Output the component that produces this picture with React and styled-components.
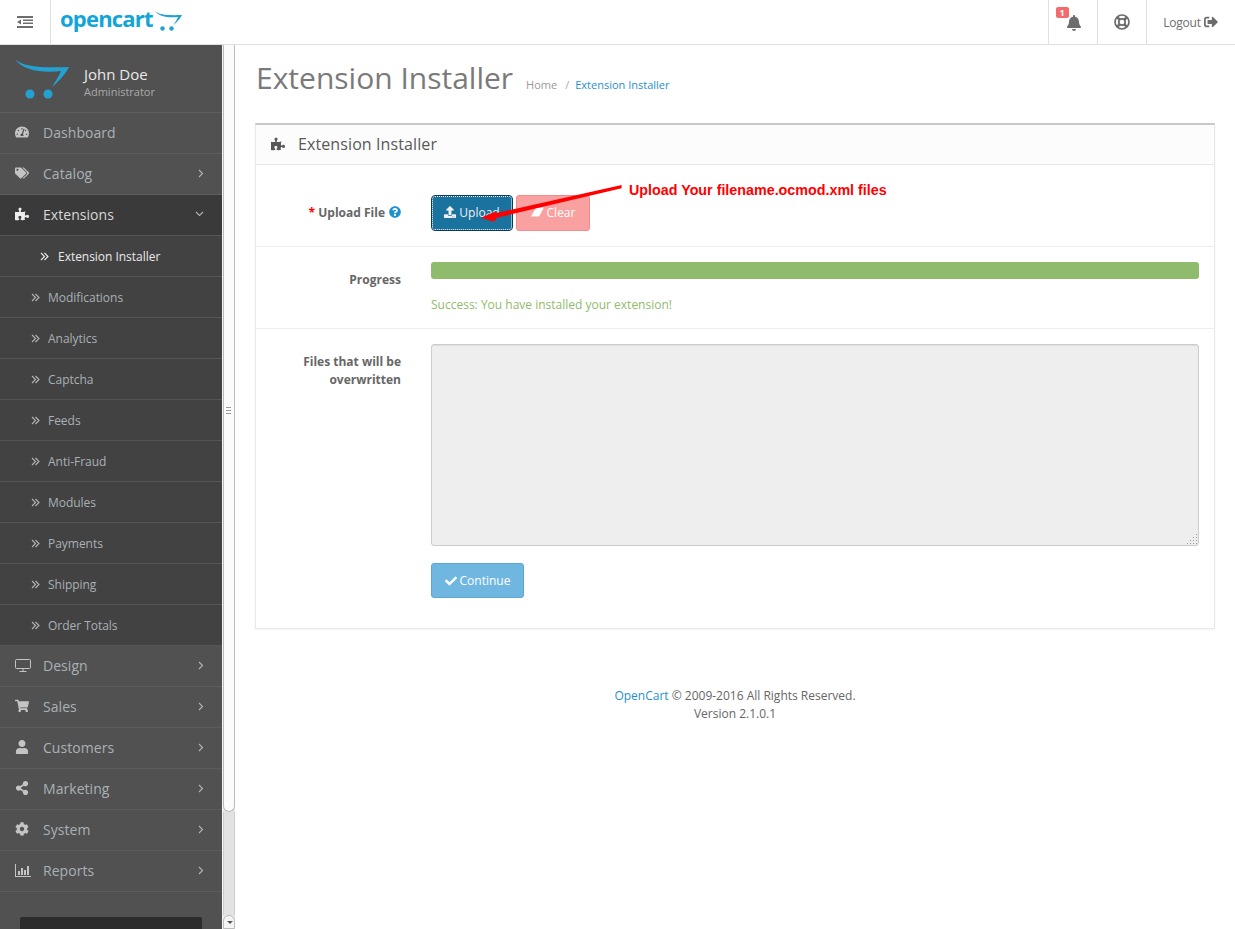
import styled, { createGlobalStyle } from 'styled-components';
import {
	FaTachometerAlt,
	FaTags,
	FaPuzzlePiece,
	FaShoppingCart,
	FaUser,
	FaShareAlt,
	FaCog,
	FaBell,
	FaSignOutAlt,
	FaUpload,
	FaCheck,
	FaQuestionCircle,
} from 'react-icons/fa';

const GlobalStyle = createGlobalStyle`
	html, body {
		margin: 0;
		padding: 0;
		height: 929px;
		overflow: hidden;
		background: #fff;
		font-family: 'Open Sans', sans-serif;
		font-size: 12px;
		color: #666;
	}
	* {
		box-sizing: border-box;
	}
`;

const ChartIcon = () => (
	<svg width="16" height="13" viewBox="0 0 16 13" fill="currentColor">
		<path d="M0 0h1v12h15v1H0z" />
		<path d="M3 7h2v4H3zM6 4h2v7H6zM9 6h2v5H9zM12 2h2v9h-2z" />
	</svg>
);

const DesktopIcon = () => (
	<svg width="16" height="13" viewBox="0 0 16 13" fill="none" stroke="currentColor">
		<rect x="0.5" y="0.5" width="15" height="9" rx="1" />
		<path d="M8 10v2M4.5 12.5h7" />
	</svg>
);

const AngleRight = () => (
	<svg width="6" height="9" viewBox="0 0 6 9" fill="none" stroke="currentColor" strokeWidth="1.1">
		<path d="M1 1l3.5 3.5L1 8" />
	</svg>
);

const AngleDown = () => (
	<svg width="9" height="6" viewBox="0 0 9 6" fill="none" stroke="currentColor" strokeWidth="1.1">
		<path d="M1 1l3.5 3.5L8 1" />
	</svg>
);

const AngleDouble = () => (
	<svg width="9" height="9" viewBox="0 0 9 9" fill="none" stroke="currentColor" strokeWidth="1.1">
		<path d="M1 1l3.5 3.5L1 8M4.5 1L8 4.5 4.5 8" />
	</svg>
);

const ToggleIcon = () => (
	<svg width="16" height="12" viewBox="0 0 16 12" fill="currentColor">
		<path d="M0 0h16v2H0zM6 3.5h10V5H6zM6 6.5h10V8H6zM0 10h16v2H0zM0 6l4-2.6v5.2z" />
	</svg>
);

const LifeRing = () => (
	<svg width="16" height="16" viewBox="0 0 16 16" fill="none" stroke="currentColor">
		<circle cx="8" cy="8" r="7" strokeWidth="1.7" />
		<circle cx="8" cy="8" r="3.2" strokeWidth="1.7" />
		<path d="M3 3l2.6 2.6M13 3l-2.6 2.6M3 13l2.6-2.6M13 13l-2.6-2.6" strokeWidth="2.6" />
	</svg>
);

const EraserIcon = () => (
	<svg width="13" height="10" viewBox="0 0 13 10" fill="currentColor">
		<path d="M5 0.5h8L8 9.5H0z" />
	</svg>
);

const topMenu = [
	{ label: 'Dashboard', icon: <FaTachometerAlt /> },
	{ label: 'Catalog', icon: <FaTags />, arrow: true },
	{ label: 'Extensions', icon: <FaPuzzlePiece />, open: true },
];

const subMenu = ['Extension Installer', 'Modifications', 'Analytics', 'Captcha', 'Feeds', 'Anti-Fraud', 'Modules', 'Payments', 'Shipping', 'Order Totals'];

const bottomMenu = [
	{ label: 'Design', icon: <DesktopIcon /> },
	{ label: 'Sales', icon: <FaShoppingCart /> },
	{ label: 'Customers', icon: <FaUser /> },
	{ label: 'Marketing', icon: <FaShareAlt /> },
	{ label: 'System', icon: <FaCog /> },
	{ label: 'Reports', icon: <ChartIcon /> },
];

const CartMark = ({ width, height }) => (
	<svg width={width} height={height} viewBox="0 0 56 40" fill="#23a1d1">
		<path d="M0 0C8 8 26 9 54 8C50 16 43 23 37 28C41 21 44 17 46 12C28 14 8 12 0 0Z" />
		<circle cx="15" cy="35" r="4.5" />
		<circle cx="33" cy="35" r="4.5" />
	</svg>
);

const MenuRow = ({ item }) => (
	<MenuItem $active={item.open}>
		<MenuIcon $active={item.open}>{item.icon}</MenuIcon>
		<MenuLabel>{item.label}</MenuLabel>
		{item.open && <Caret><AngleDown /></Caret>}
		{item.arrow && <Caret><AngleRight /></Caret>}
	</MenuItem>
);

const App = () => {
	return (
		<>
			<GlobalStyle />
			<Page>
				<Header>
					<MenuToggle>
						<ToggleIcon />
					</MenuToggle>
					<Logo>
						<LogoText>opencart</LogoText>
						<LogoCart>
							<CartMark width={28} height={20} />
						</LogoCart>
					</Logo>
					<HeaderNav>
						<NavCell>
							<BellWrap>
								<FaBell />
								<Badge>1</Badge>
							</BellWrap>
						</NavCell>
						<NavCell>
							<LifeRing />
						</NavCell>
						<LogoutCell>
							Logout <FaSignOutAlt />
						</LogoutCell>
					</HeaderNav>
				</Header>
				<Body>
					<Sidebar>
						<Profile>
							<CartMark width={56} height={40} />
							<ProfileText>
								<ProfileName>John Doe</ProfileName>
								<ProfileRole>Administrator</ProfileRole>
							</ProfileText>
						</Profile>
						{topMenu.map((item) => (
							<MenuRow key={item.label} item={item} />
						))}
						{subMenu.map((label, i) => (
							<SubItem key={label} $active={i === 0}>
								<AngleDouble />
								{label}
							</SubItem>
						))}
						{bottomMenu.map((item) => (
							<MenuRow key={item.label} item={{ ...item, arrow: true }} />
						))}
						<StatsBox />
					</Sidebar>
					<Gutter>
						<Grip>
							<i />
							<i />
							<i />
						</Grip>
						<Thumb />
						<Track />
						<ScrollArrow />
					</Gutter>
					<Content>
						<TitleRow>
							<Title>Extension Installer</Title>
							<Crumbs>
								<CrumbHome>Home</CrumbHome>
								<CrumbSep>/</CrumbSep>
								<CrumbLink>Extension Installer</CrumbLink>
							</Crumbs>
						</TitleRow>
						<Panel>
							<PanelHeading>
								<FaPuzzlePiece />
								Extension Installer
							</PanelHeading>
							<FormRow $height={82} $top={30}>
								<FieldLabel>
									<Required>*</Required>&nbsp;Upload File
									<HelpIcon>
										<FaQuestionCircle />
									</HelpIcon>
								</FieldLabel>
								<FieldBody>
									<ButtonRow>
										<Button $kind="upload">
											<FaUpload /> Upload
										</Button>
										<Button $kind="clear">
											<EraserIcon /> Clear
										</Button>
									</ButtonRow>
								</FieldBody>
							</FormRow>
							<FormRow $height={82} $top={15}>
								<FieldLabel>Progress</FieldLabel>
								<FieldBody>
									<ProgressTrack>
										<ProgressBar style={{ width: '100%' }} />
									</ProgressTrack>
									<SuccessText>Success: You have installed your extension!</SuccessText>
								</FieldBody>
							</FormRow>
							<FilesRow>
								<FieldLabel>
									Files that will be
									<br />
									overwritten
								</FieldLabel>
								<FieldBody>
									<Overwrite disabled />
									<Button $kind="continue">
										<FaCheck /> Continue
									</Button>
								</FieldBody>
							</FilesRow>
						</Panel>
						<Footer>
							<FooterLink>OpenCart</FooterLink> © 2009-2016 All Rights Reserved.
							<br />
							Version 2.1.0.1
						</Footer>
						<Note>
							<svg width="160" height="50" viewBox="0 0 160 50">
								<path d="M151.6 5L151.6 8.3L27 37.7L24 41.7L11 37.7L25 31.7L26.7 33Z" fill="#f00" />
							</svg>
							<NoteText>Upload Your filename.ocmod.xml files</NoteText>
						</Note>
					</Content>
				</Body>
			</Page>
		</>
	);
};

const Page = styled.div`
	width: 1235px;
	height: 929px;
	overflow: hidden;
	display: flex;
	flex-direction: column;
`;

const Header = styled.header`
	height: 45px;
	flex: none;
	display: flex;
	align-items: stretch;
	background: #fff;
	border-bottom: 1px solid #e1e1e1;
`;

const MenuToggle = styled.div`
	width: 51px;
	display: flex;
	align-items: center;
	justify-content: center;
	border-right: 1px solid #e1e1e1;
	color: #6d6d6d;
`;

const Logo = styled.div`
	display: flex;
	align-items: flex-start;
	padding: 2px 0 0 9px;
`;

const LogoText = styled.span`
	font-family: 'Open Sans', sans-serif;
	font-weight: 700;
	font-size: 22px;
	line-height: 32px;
	letter-spacing: -0.8px;
	color: #12a5d8;
`;

const LogoCart = styled.span`
	margin: 9px 0 0 2px;
	display: block;
`;

const HeaderNav = styled.nav`
	margin-left: auto;
	display: flex;
	align-items: stretch;
`;

const NavCell = styled.div`
	width: 49px;
	display: flex;
	align-items: center;
	justify-content: center;
	border-left: 1px solid #e1e1e1;
	color: #6d6d6d;
	font-size: 16px;
`;

const BellWrap = styled.span`
	position: relative;
	display: flex;
	margin: 1px 0 0 1px;
`;

const Badge = styled.span`
	position: absolute;
	top: -8px;
	left: -10px;
	width: 13px;
	height: 11px;
	border-radius: 2px;
	background: #f56b6b;
	color: #fff;
	font-size: 9px;
	font-weight: 700;
	line-height: 11px;
	text-align: center;
`;

const LogoutCell = styled.div`
	width: 89px;
	display: flex;
	align-items: center;
	justify-content: center;
	gap: 3px;
	padding-right: 1px;
	border-left: 1px solid #e1e1e1;
	color: #6d6d6d;
	font-size: 12px;
	letter-spacing: -0.2px;

	svg {
		font-size: 14px;
	}
`;

const Body = styled.div`
	flex: 1;
	display: flex;
	min-height: 0;
`;

const Sidebar = styled.aside`
	width: 222px;
	flex: none;
	background: #515151;
	overflow: hidden;
`;

const Profile = styled.div`
	height: 68px;
	display: flex;
	align-items: center;
	gap: 13px;
	padding: 0 0 0 15px;
	border-bottom: 1px solid #5e5e5e;

	svg {
		flex: none;
	}
`;

const ProfileText = styled.div`
	display: flex;
	flex-direction: column;
	margin-top: 7px;
`;

const ProfileName = styled.span`
	color: #e9e9e9;
	font-size: 15px;
	line-height: 19px;
`;

const ProfileRole = styled.span`
	color: #a9a9a9;
	font-size: 11px;
	line-height: 15px;
`;

const MenuItem = styled.div`
	height: 41px;
	display: flex;
	align-items: center;
	padding: 0 18px 2px 15px;
	background: ${(p) => (p.$active ? '#3a3a3a' : '#515151')};
	border-bottom: 1px solid ${(p) => (p.$active ? '#555' : '#5c5c5c')};
	color: ${(p) => (p.$active ? '#d8d8d8' : '#a9b1b6')};
	font-size: 14px;
	letter-spacing: 0.05px;
`;

const MenuIcon = styled.span`
	width: 28px;
	display: flex;
	align-items: center;
	font-size: 14px;
	color: ${(p) => (p.$active ? '#eee' : '#c4c4c4')};
`;

const MenuLabel = styled.span`
	flex: 1;
`;

const Caret = styled.span`
	display: flex;
	color: #b4b4b4;
`;

const SubItem = styled.div`
	height: 41px;
	display: flex;
	align-items: center;
	gap: ${(p) => (p.$active ? '9px' : '8px')};
	padding-left: ${(p) => (p.$active ? '40px' : '31px')};
	background: #424242;
	border-bottom: 1px solid #555;
	color: ${(p) => (p.$active ? '#eaeaea' : '#a9b1b6')};
	font-size: 12px;
	letter-spacing: -0.03px;

	svg {
		flex: none;
		color: ${(p) => (p.$active ? '#eaeaea' : '#b4b4b4')};
	}
`;

const StatsBox = styled.div`
	height: 20px;
	margin: 25px 20px 0;
	background: #2c2c2c;
	border-radius: 2px 2px 0 0;
`;

const Gutter = styled.div`
	position: relative;
	width: 13px;
	flex: none;
	display: flex;
	flex-direction: column;
	background: #e6e6e6;
	border-left: 1px solid #f5f5f5;
`;

const Grip = styled.div`
	position: absolute;
	top: 362px;
	left: 3px;
	width: 5px;
	display: flex;
	flex-direction: column;
	gap: 2px;

	i {
		display: block;
		height: 1px;
		background: #999;
	}
`;

const Thumb = styled.div`
	height: 767px;
	flex: none;
	background: #fbfbfb;
	border: 1px solid #bbb;
	border-top: none;
	border-radius: 0 0 6px 6px;
`;

const Track = styled.div`
	flex: 1;
	background: #e2e2e2;
	border-left: 1px solid #ccc;
	border-right: 1px solid #ccc;
`;

const ScrollArrow = styled.div`
	height: 14px;
	flex: none;
	position: relative;
	background: #f4f4f4;
	border: 1px solid #bbb;
	border-radius: 6px 6px 0 0;

	&::after {
		content: '';
		position: absolute;
		left: 3px;
		top: 5px;
		border: 3px solid transparent;
		border-top: 3px solid #555;
	}
`;

const Content = styled.main`
	position: relative;
	flex: 1;
	min-width: 0;
	padding: 0 20px;
`;

const TitleRow = styled.div`
	height: 78px;
	display: flex;
	align-items: flex-start;
	padding-top: 12px;
`;

const Title = styled.h1`
	margin: 0 0 0 1px;
	font-size: 30px;
	font-weight: 400;
	line-height: 42px;
	color: #7a7a7a;
`;

const Crumbs = styled.div`
	display: flex;
	gap: 6px;
	margin: 20px 0 0 13px;
	font-size: 11px;
	line-height: 15px;
`;

const CrumbHome = styled.span`
	color: #999;
`;

const CrumbSep = styled.span`
	color: #aaa;
	margin-left: 2px;
`;

const CrumbLink = styled.span`
	color: #1e91cf;
`;

const Panel = styled.section`
	width: 960px;
	height: 506px;
	border: 1px solid #e8e8e8;
	border-top: 2px solid #c8c8c8;
	box-shadow: 0 1px 2px rgba(0, 0, 0, 0.05);
`;

const PanelHeading = styled.div`
	height: 40px;
	display: flex;
	align-items: center;
	gap: 13px;
	padding: 0 0 2px 15px;
	background: #fcfcfc;
	border-bottom: 1px solid #e8e8e8;
	color: #595959;
	font-size: 16px;
	letter-spacing: 0.1px;

	svg {
		font-size: 14px;
	}
`;

const FormRow = styled.div`
	height: ${(p) => p.$height}px;
	display: flex;
	border-bottom: 1px solid #ededed;
	padding: ${(p) => p.$top}px 15px 0 0;
`;

const FilesRow = styled.div`
	display: flex;
	padding: 15px 15px 0 0;
`;

const FieldLabel = styled.label`
	width: 145px;
	flex: none;
	margin-right: 30px;
	padding-top: 9px;
	text-align: right;
	font-weight: 700;
	line-height: 18px;
	color: #666;
`;

const Required = styled.span`
	color: #f00;
`;

const HelpIcon = styled.span`
	display: inline-block;
	margin-left: 4px;
	color: #1e91cf;
	font-size: 12px;
	vertical-align: -1px;
`;

const FieldBody = styled.div`
	flex: 1;
	min-width: 0;
`;

const ButtonRow = styled.div`
	display: flex;
	gap: 3px;
`;

const kinds = {
	upload: 'background: #1a729f; border: 1px dotted #fff; outline: 1px solid #0c3a52; color: #f0f0f0; width: 80px; height: 34px; margin: 1px; padding-bottom: 2px;',
	clear: 'background: #f9a0a0; border: 1px solid #f28c8c; color: #fff; width: 74px; height: 36px; padding-bottom: 2px;',
	continue: 'background: #6fb7e1; border: 1px solid #5ea7d1; color: #fff; width: 93px; height: 35px; margin-top: 17px;',
};

const Button = styled.button`
	display: flex;
	align-items: center;
	justify-content: center;
	gap: 3px;
	padding: 0;
	border-radius: 3px;
	font-family: 'Open Sans', sans-serif;
	font-size: 12px;
	${(p) => kinds[p.$kind]}

	svg {
		font-size: 12px;
	}
`;

const ProgressTrack = styled.div`
	height: 17px;
	background: #f5f5f5;
	border-radius: 3px;
	overflow: hidden;
`;

const ProgressBar = styled.div`
	height: 100%;
	background: #8fbb6c;
`;

const SuccessText = styled.div`
	margin-top: 17px;
	line-height: 18px;
	color: #8fbb6c;
`;

const Overwrite = styled.textarea`
	display: block;
	width: 100%;
	height: 202px;
	background: #eee;
	border: 1px solid #ccc;
	border-radius: 3px;
	box-shadow: inset 0 1px 1px rgba(0, 0, 0, 0.075);
	resize: vertical;

	&::-webkit-resizer {
		background-image: linear-gradient(135deg, #eee 58%, transparent 58%), radial-gradient(#999 0.8px, transparent 1px);
		background-size: 100% 100%, 3px 3px;
	}
`;

const Footer = styled.footer`
	width: 960px;
	margin-top: 58px;
	text-align: center;
	line-height: 18px;
	color: #666;
`;

const FooterLink = styled.span`
	color: #1e91cf;
`;

const Note = styled.div`
	position: absolute;
	top: 135px;
	left: 235px;
	display: flex;
	align-items: flex-start;
`;

const NoteText = styled.span`
	position: absolute;
	left: 159px;
	top: 1px;
	white-space: nowrap;
	font-family: 'Liberation Sans', Arial, sans-serif;
	font-weight: 700;
	font-size: 14.3px;
	line-height: 18px;
	color: #f00;
`;

export default App;
